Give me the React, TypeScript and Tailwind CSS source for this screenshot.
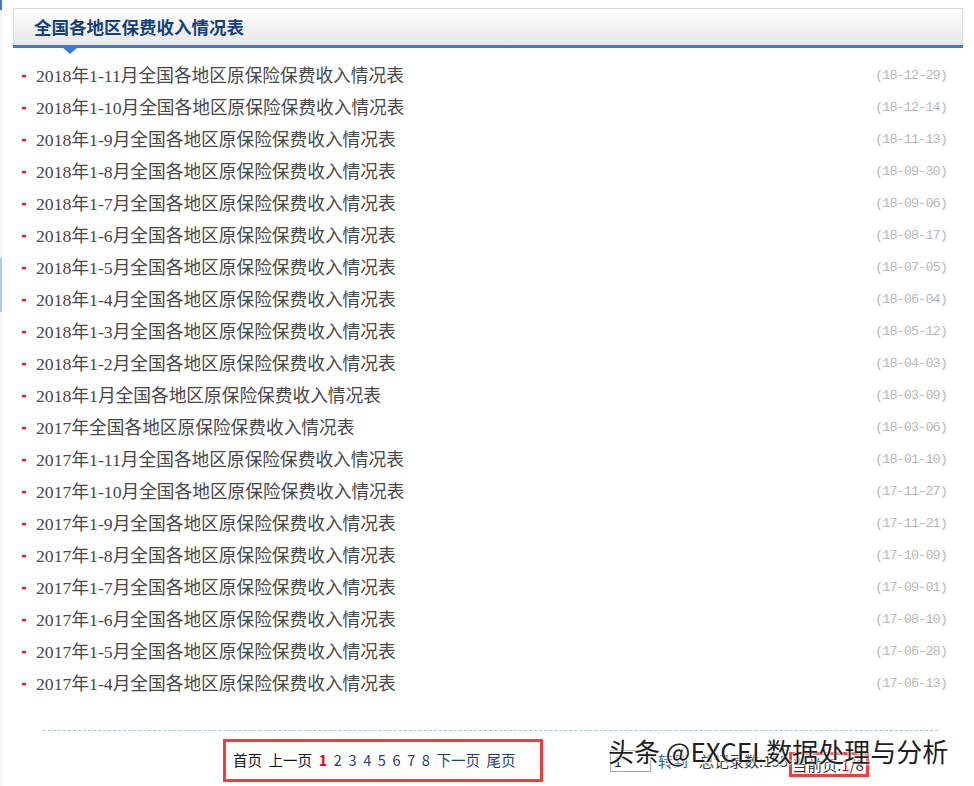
import React from "react";

const rows: [string, string][] = [
  ["2018年1-11月全国各地区原保险保费收入情况表", "(18-12-29)"],
  ["2018年1-10月全国各地区原保险保费收入情况表", "(18-12-14)"],
  ["2018年1-9月全国各地区原保险保费收入情况表", "(18-11-13)"],
  ["2018年1-8月全国各地区原保险保费收入情况表", "(18-09-30)"],
  ["2018年1-7月全国各地区原保险保费收入情况表", "(18-09-06)"],
  ["2018年1-6月全国各地区原保险保费收入情况表", "(18-08-17)"],
  ["2018年1-5月全国各地区原保险保费收入情况表", "(18-07-05)"],
  ["2018年1-4月全国各地区原保险保费收入情况表", "(18-06-04)"],
  ["2018年1-3月全国各地区原保险保费收入情况表", "(18-05-12)"],
  ["2018年1-2月全国各地区原保险保费收入情况表", "(18-04-03)"],
  ["2018年1月全国各地区原保险保费收入情况表", "(18-03-09)"],
  ["2017年全国各地区原保险保费收入情况表", "(18-03-06)"],
  ["2017年1-11月全国各地区原保险保费收入情况表", "(18-01-10)"],
  ["2017年1-10月全国各地区原保险保费收入情况表", "(17-11-27)"],
  ["2017年1-9月全国各地区原保险保费收入情况表", "(17-11-21)"],
  ["2017年1-8月全国各地区原保险保费收入情况表", "(17-10-09)"],
  ["2017年1-7月全国各地区原保险保费收入情况表", "(17-09-01)"],
  ["2017年1-6月全国各地区原保险保费收入情况表", "(17-08-10)"],
  ["2017年1-5月全国各地区原保险保费收入情况表", "(17-06-28)"],
  ["2017年1-4月全国各地区原保险保费收入情况表", "(17-06-13)"],
];

export default function App() {
  return (
    <div
      className="w-[974px] h-[786px] bg-white relative overflow-hidden flex"
      style={{ fontFamily: "'Noto Sans CJK SC', sans-serif" }}
    >
      {/* left edge strip */}
      <div className="w-[2px] flex flex-col">
        <div className="h-[10px] bg-[#3b7ad0]" />
        <div className="h-[248px] bg-[#f3f5f8]" />
        <div className="h-[54px] bg-[#a9ccf2]" />
        <div className="flex-1 bg-[#f6f7f9]" />
      </div>

      <div className="flex-1 pt-[8px] pl-[11px] pr-[11px] flex flex-col">
        {/* header */}
        <div className="relative h-[40px] border-t border-x border-[#dadada] bg-linear-to-b from-white to-[#e4e4e4] flex flex-col">
          <div className="flex-1 flex items-center pl-[20px] text-[17.5px] font-bold text-[#123f7f] leading-none">
            全国各地区保费收入情况表
          </div>
          <div className="h-[3px] bg-[#3a7bd5] -mx-px" />
          <div className="absolute left-[49px] top-full w-0 h-0 border-l-[7px] border-r-[7px] border-t-[6px] border-l-transparent border-r-transparent border-t-[#3a7bd5]" />
        </div>

        {/* list */}
        <div className="mt-[12px] pl-[9px] pr-[16px] flex flex-col">
          {rows.map(([t, d], i) => (
            <div key={i} className="h-[32px] flex items-center">
              <span className="w-[5px] h-[5px] bg-[#f4f1f1] flex items-center mr-[9px]">
                <span className="w-[4px] h-[2px] bg-[#e8101a]" />
              </span>
              <span
                className="flex-1 text-[17.7px] text-[#474747] leading-none pt-px"
                style={{ fontFamily: "'Liberation Serif', 'Noto Sans CJK SC', serif" }}
              >
                {t}
              </span>
              <span
                className="text-[13.5px] tracking-[-0.9px] text-[#b8b8b8] leading-none"
                style={{ fontFamily: "'Liberation Mono', monospace" }}
              >
                {d}
              </span>
            </div>
          ))}
        </div>

        {/* dashed separator */}
        <div className="mt-[30px] ml-[30px] w-[895px] border-t border-dashed border-[#a9c9d2]" />

        {/* pagination */}
        <div className="mt-[8px] ml-[210px] flex items-center text-[14.5px] leading-none">
          <div className="w-[320px] h-[43px] border-[3px] border-[#f23b3b] flex items-center pl-[7px] gap-[6.6px]">
            <span className="text-[#111]">首页</span>
            <span className="text-[#111]">上一页</span>
            <span className="text-[#e3000f] font-bold">1</span>
            {[2, 3, 4, 5, 6, 7, 8].map((n) => (
              <span key={n} className="text-[#1a3f78]">
                {n}
              </span>
            ))}
            <span className="text-[#1a3f78]">下一页</span>
            <span className="text-[#1a3f78]">尾页</span>
          </div>
          <div className="ml-[67px] w-[41px] h-[22px] border border-[#a8a8a8] flex items-center pl-[3px] text-[#222] text-[14px]">
            1
          </div>
          <span className="ml-[7px] text-[#1f5fae] text-[15px]">转到</span>
          <span className="ml-[11px] text-[#333] text-[15px]">总记录数:155</span>
          <span className="ml-[1px] mt-[8px] w-[80px] h-[25px] border-[3px] border-[#f23b3b] flex items-center text-[#333] text-[15px]">
            当前页:<span className="text-[#e3000f]">1</span>/8
          </span>
        </div>
      </div>

      {/* watermark overlay */}
      <div className="absolute left-[608px] top-[738px] text-[26px] leading-none text-[#1e1e1e] whitespace-nowrap [text-shadow:0_0_2px_#fff,0_0_2px_#fff,0_0_3px_#fff]">
        头条 @EXCEL数据处理与分析
      </div>
    </div>
  );
}
